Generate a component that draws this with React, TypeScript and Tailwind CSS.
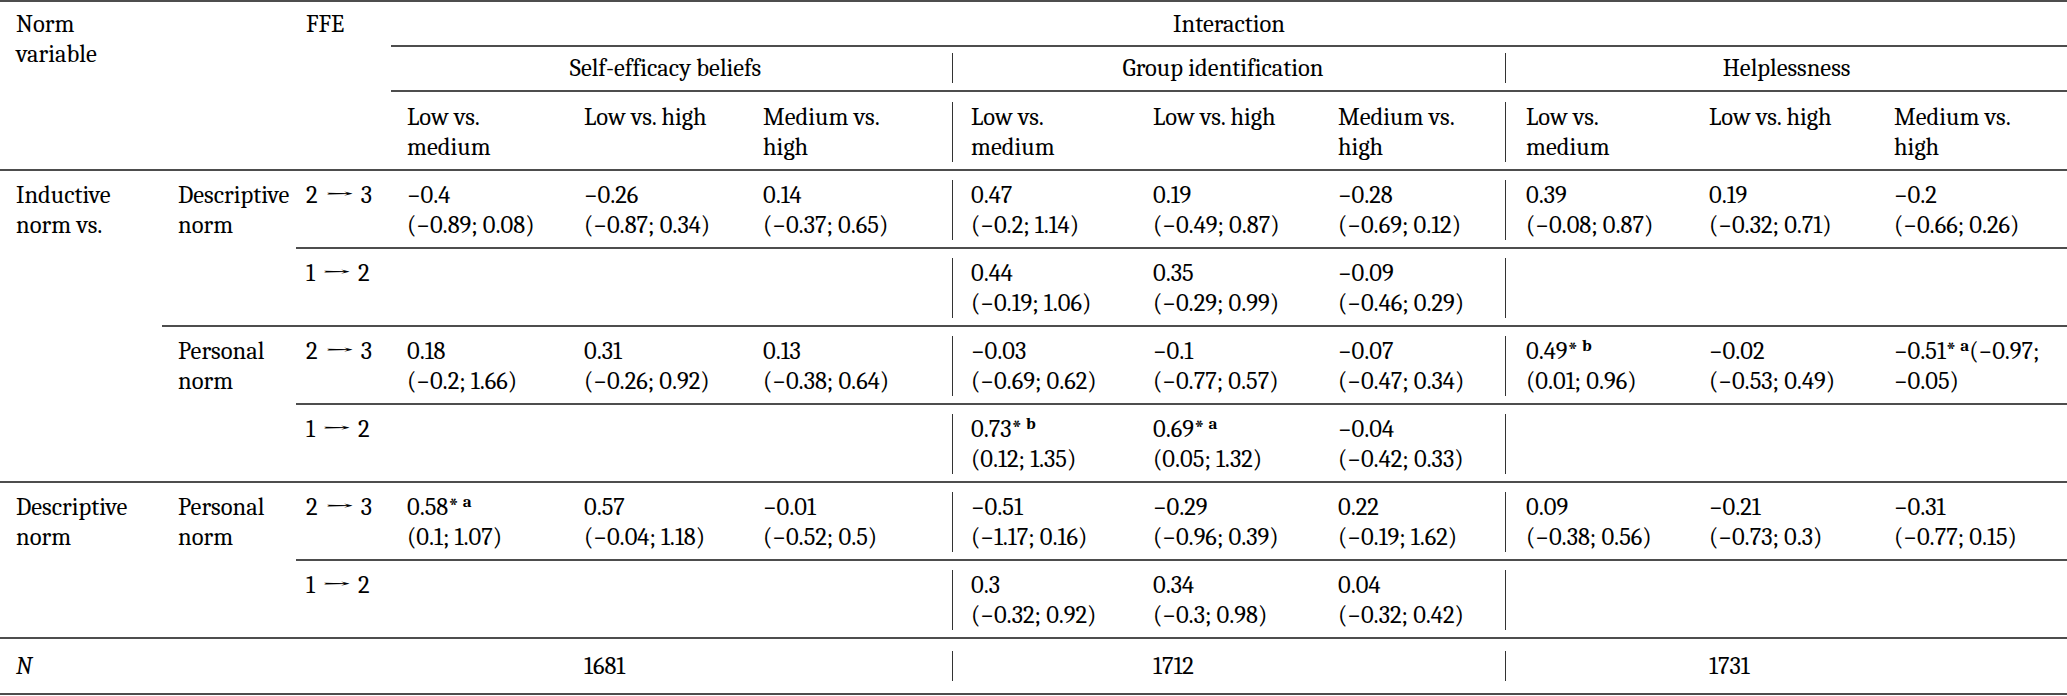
import type { ReactNode } from 'react'

type Val = { v: string; ci?: string; sup?: string; wrap?: boolean } | null

const LINE = 'border-[#4d4d4d]'
const COLS = [162, 134, 95, 177, 179, 193, 197, 185, 171, 200, 185, 189]

const Sup = ({ children }: { children: ReactNode }) => (
  <sup className="ml-[4px] text-[17px] font-bold">{children}</sup>
)

const ValueText = ({ val }: { val: Val }) => {
  if (!val) return null
  if (val.wrap) {
    // this one runs on after the superscript, like in the source
    return (
      <>
        {val.v}
        {val.sup && <Sup>{val.sup}</Sup>}
        {val.ci?.split(' ')[0]}
        <br />
        {val.ci?.split(' ')[1]}
      </>
    )
  }
  return (
    <>
      {val.v}
      {val.sup && <Sup>{val.sup}</Sup>}
      {val.ci && (
        <>
          <br />
          {val.ci}
        </>
      )}
    </>
  )
}

const Plain = ({ val, top }: { val: Val; top: boolean }) => (
  <td className={`align-top pt-[9px] pb-[7px] pl-4 ${top ? `border-t-2 ${LINE}` : ''}`}>
    <ValueText val={val} />
  </td>
)

const Divided = ({ val, top, pad }: { val: Val; top: boolean; pad: string }) => (
  <td className={`align-top pt-[9px] pb-[7px] pl-3 ${top ? `border-t-2 ${LINE}` : ''}`}>
    <div className={`min-h-[60px] border-l border-[#333] ${pad}`}>
      <ValueText val={val} />
    </div>
  </td>
)

const DataCells = ({ se, gi, h, top }: { se: Val[] | null; gi: Val[]; h: Val[] | null; top: boolean }) => (
  <>
    <Plain val={se ? se[0] : null} top={top} />
    <Plain val={se ? se[1] : null} top={top} />
    <Plain val={se ? se[2] : null} top={top} />
    <Divided val={gi[0]} top={top} pad="pl-[18px]" />
    <Plain val={gi[1]} top={top} />
    <Plain val={gi[2]} top={top} />
    <Divided val={h ? h[0] : null} top={top} pad="pl-[20px]" />
    <Plain val={h ? h[1] : null} top={top} />
    <Plain val={h ? h[2] : null} top={top} />
  </>
)

const FfeCell = ({ from, to, top }: { from: number; to: number; top: boolean }) => (
  <td className={`align-top pt-[9px] pb-[7px] pl-[10px] whitespace-nowrap ${top ? `border-t-2 ${LINE}` : ''}`}>
    {from}
    <span className="inline-block mx-[12px] scale-x-[1.6]">→</span>
    {to}
  </td>
)

const NameCell = ({ children, top, rowSpan }: { children: ReactNode; top: boolean; rowSpan: number }) => (
  <td rowSpan={rowSpan} className={`align-top pt-[9px] pb-[7px] pl-4 ${top ? `border-t-2 ${LINE}` : ''}`}>
    {children}
  </td>
)

// the three "x vs. y" heads, repeated per construct
function ContrastHead({ pad }: { pad?: string }) {
  const cell = `align-top font-normal text-left pt-[10px] pb-[7px] border-b-2 ${LINE}`
  return (
    <>
      {pad ? (
        <th className={`${cell} pl-3`}>
          <div className={`border-l border-[#333] ${pad}`}>
            Low vs.
            <br />
            medium
          </div>
        </th>
      ) : (
        <th className={`${cell} pl-4`}>
          Low vs.
          <br />
          medium
        </th>
      )}
      <th className={`${cell} pl-4`}>Low vs. high</th>
      <th className={`${cell} pl-4`}>
        Medium vs.
        <br />
        high
      </th>
    </>
  )
}

export default function App() {
  const hdr = `border-b-2 ${LINE}`
  const nCell = `align-top pt-[12px] pb-[12px] border-t-2 ${hdr}`

  return (
    <div className="w-[2067px] h-[696px] bg-white text-black font-serif [font-family:'Liberation_Serif',serif] text-[24.5px] leading-[30px]">
      <table className="w-[2067px] table-fixed border-separate border-spacing-0">
        <colgroup>
          {COLS.map((w, i) => (
            <col key={i} style={{ width: w }} />
          ))}
        </colgroup>
        <thead>
          <tr>
            <th rowSpan={3} colSpan={2} className={`align-top text-left font-normal pt-[7px] pl-4 border-t-2 ${hdr}`}>
              Norm
              <br />
              variable
            </th>
            <th rowSpan={3} className={`align-top text-left font-normal pt-[7px] pl-[10px] border-t-2 ${hdr}`}>
              FFE
            </th>
            <th colSpan={9} className={`text-center font-normal pt-[7px] pb-[6px] border-t-2 ${hdr}`}>
              Interaction
            </th>
          </tr>
          <tr>
            <th colSpan={3} className={`text-center font-normal pt-[6px] pb-[7px] ${hdr}`}>
              Self-efficacy beliefs
            </th>
            <th colSpan={3} className={`font-normal pt-[6px] pb-[7px] pl-3 ${hdr}`}>
              <div className="border-l border-[#333] text-center">Group identification</div>
            </th>
            <th colSpan={3} className={`font-normal pt-[6px] pb-[7px] pl-3 ${hdr}`}>
              <div className="border-l border-[#333] text-center">Helplessness</div>
            </th>
          </tr>
          <tr>
            <ContrastHead />
            <ContrastHead pad="pl-[18px]" />
            <ContrastHead pad="pl-[20px]" />
          </tr>
        </thead>
        <tbody>
          <tr>
            <NameCell rowSpan={4} top={false}>
              Inductive
              <br />
              norm vs.
            </NameCell>
            <NameCell rowSpan={2} top={false}>
              Descriptive
              <br />
              norm
            </NameCell>
            <FfeCell from={2} to={3} top={false} />
            <DataCells
              top={false}
              se={[
                { v: '−0.4', ci: '(−0.89; 0.08)' },
                { v: '−0.26', ci: '(−0.87; 0.34)' },
                { v: '0.14', ci: '(−0.37; 0.65)' },
              ]}
              gi={[
                { v: '0.47', ci: '(−0.2; 1.14)' },
                { v: '0.19', ci: '(−0.49; 0.87)' },
                { v: '−0.28', ci: '(−0.69; 0.12)' },
              ]}
              h={[
                { v: '0.39', ci: '(−0.08; 0.87)' },
                { v: '0.19', ci: '(−0.32; 0.71)' },
                { v: '−0.2', ci: '(−0.66; 0.26)' },
              ]}
            />
          </tr>
          <tr>
            <FfeCell from={1} to={2} top />
            <DataCells
              top
              se={null}
              gi={[
                { v: '0.44', ci: '(−0.19; 1.06)' },
                { v: '0.35', ci: '(−0.29; 0.99)' },
                { v: '−0.09', ci: '(−0.46; 0.29)' },
              ]}
              h={null}
            />
          </tr>
          <tr>
            <NameCell rowSpan={2} top>
              Personal
              <br />
              norm
            </NameCell>
            <FfeCell from={2} to={3} top />
            <DataCells
              top
              se={[
                { v: '0.18', ci: '(−0.2; 1.66)' },
                { v: '0.31', ci: '(−0.26; 0.92)' },
                { v: '0.13', ci: '(−0.38; 0.64)' },
              ]}
              gi={[
                { v: '−0.03', ci: '(−0.69; 0.62)' },
                { v: '−0.1', ci: '(−0.77; 0.57)' },
                { v: '−0.07', ci: '(−0.47; 0.34)' },
              ]}
              h={[
                { v: '0.49*', sup: 'b', ci: '(0.01; 0.96)' },
                { v: '−0.02', ci: '(−0.53; 0.49)' },
                { v: '−0.51*', sup: 'a', ci: '(−0.97; −0.05)', wrap: true },
              ]}
            />
          </tr>
          <tr>
            <FfeCell from={1} to={2} top />
            <DataCells
              top
              se={null}
              gi={[
                { v: '0.73*', sup: 'b', ci: '(0.12; 1.35)' },
                { v: '0.69*', sup: 'a', ci: '(0.05; 1.32)' },
                { v: '−0.04', ci: '(−0.42; 0.33)' },
              ]}
              h={null}
            />
          </tr>
          <tr>
            <NameCell rowSpan={2} top>
              Descriptive
              <br />
              norm
            </NameCell>
            <NameCell rowSpan={2} top>
              Personal
              <br />
              norm
            </NameCell>
            <FfeCell from={2} to={3} top />
            <DataCells
              top
              se={[
                { v: '0.58*', sup: 'a', ci: '(0.1; 1.07)' },
                { v: '0.57', ci: '(−0.04; 1.18)' },
                { v: '−0.01', ci: '(−0.52; 0.5)' },
              ]}
              gi={[
                { v: '−0.51', ci: '(−1.17; 0.16)' },
                { v: '−0.29', ci: '(−0.96; 0.39)' },
                { v: '0.22', ci: '(−0.19; 1.62)' },
              ]}
              h={[
                { v: '0.09', ci: '(−0.38; 0.56)' },
                { v: '−0.21', ci: '(−0.73; 0.3)' },
                { v: '−0.31', ci: '(−0.77; 0.15)' },
              ]}
            />
          </tr>
          <tr>
            <FfeCell from={1} to={2} top />
            <DataCells
              top
              se={null}
              gi={[
                { v: '0.3', ci: '(−0.32; 0.92)' },
                { v: '0.34', ci: '(−0.3; 0.98)' },
                { v: '0.04', ci: '(−0.32; 0.42)' },
              ]}
              h={null}
            />
          </tr>
          {/* N row */}
          <tr>
            <td className={`${nCell} pl-4 italic`}>N</td>
            <td className={nCell} />
            <td className={nCell} />
            <td className={nCell} />
            <td className={`${nCell} pl-4`}>1681</td>
            <td className={nCell} />
            <td className={`${nCell} pl-3`}>
              <div className="h-[30px] border-l border-[#333]" />
            </td>
            <td className={`${nCell} pl-4`}>1712</td>
            <td className={nCell} />
            <td className={`${nCell} pl-3`}>
              <div className="h-[30px] border-l border-[#333]" />
            </td>
            <td className={`${nCell} pl-4`}>1731</td>
            <td className={nCell} />
          </tr>
        </tbody>
      </table>
    </div>
  )
}
